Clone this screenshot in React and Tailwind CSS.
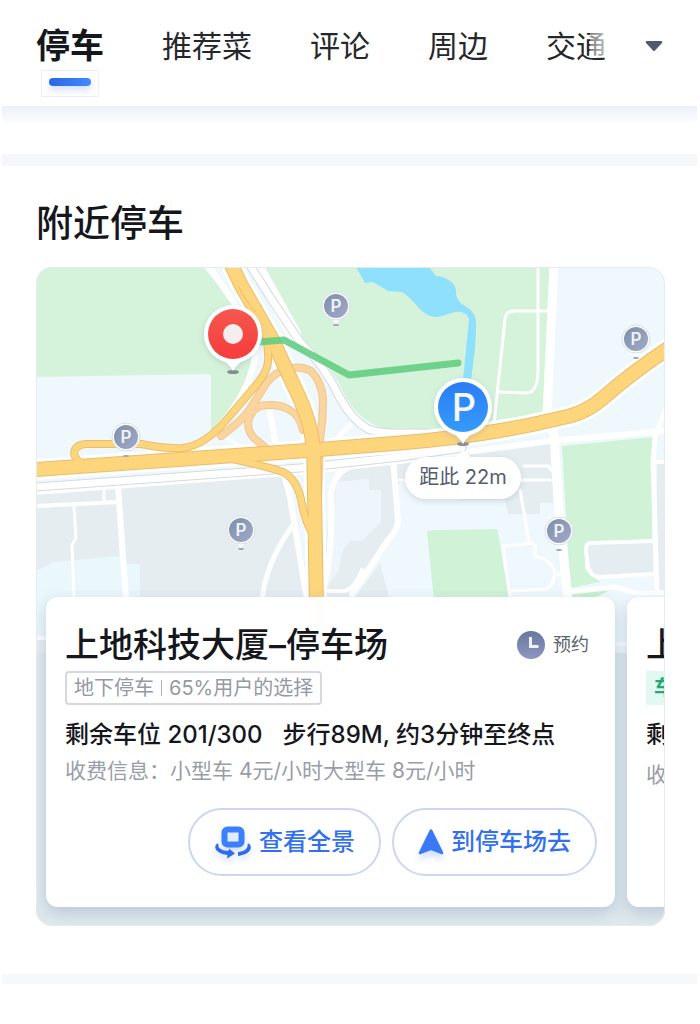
import React, { useState } from "react";

const tabs = ["停车", "推荐菜", "评论", "周边", "交通"];

const grayPins = [
  { x: 336, y: 306 },
  { x: 636, y: 339 },
  { x: 126, y: 437 },
  { x: 241, y: 530 },
  { x: 559, y: 531 },
];

// Yellow roads: every path is stroked twice, first the casing, then the fill
const ramps = [
  "M266 338 Q269 352 268 362 Q267 372 257 384 L228 418 Q205 446 182 448 Q165 449 141 444 L86 444 Q75 445 74 453 Q75 460 83 464",
  "M232 459 Q262 465 283 472 Q298 480 302 504 Q305 522 313 534",
];
const lightRamps = [
  "M221 436 Q238 424 248 412 L267 382 Q276 372 286 369 Q300 365 311 371 Q322 382 323 400 Q323 420 320 440 L318 497",
  "M303 430 Q300 415 288 409 Q277 403 260 406 Q250 411 248 422 Q248 432 254 438 L266 448",
];
const mainRoads = [
  "M230 262 L241 285 L256 311 L273 341 L293 384 Q305 408 310 428 Q314 445 314 465 L317 640",
  "M30 470 L300 451 L400 443 Q470 437 530 425 L570 416 Q588 411 603 398 Q635 370 672 346",
];
const frontage = [
  "M248 262 L270 297 L300 342 Q325 366 340 398 Q352 420 368 429 Q380 434 410 433 L462 434",
  "M36 487 L300 468 L400 457 L462 448",
];

function GrayPin({ x, y }) {
  return (
    <g>
      <ellipse cx={x} cy={y + 19} rx="3" ry="1" fill="#9aa5b0" />
      <path d={`M${x - 5} ${y + 12} L${x} ${y + 18} L${x + 5} ${y + 12}Z`} fill="#fff" />
      <circle cx={x} cy={y} r="14" fill="#fff" stroke="#d5dfe8" strokeWidth="1" />
      <circle cx={x} cy={y} r="12" fill="url(#grayPin)" />
      <text x={x} y={y + 6} textAnchor="middle" fontSize="17" fontWeight="600" fill="#f1f4fa">
        P
      </text>
    </g>
  );
}

function MapView() {
  return (
    <svg
      viewBox="36 267 629 659"
      preserveAspectRatio="xMidYMin slice"
      className="absolute inset-0 h-full w-full"
      aria-label="附近停车地图"
    >
      <defs>
        <linearGradient id="grayPin" x1="0" y1="0" x2="1" y2="1">
          <stop offset="0" stopColor="#7e8fa8" />
          <stop offset="1" stopColor="#a2a9cb" />
        </linearGradient>
        <linearGradient id="redPin" x1="0" y1="0" x2="0" y2="1">
          <stop offset="0" stopColor="#f5574f" />
          <stop offset="1" stopColor="#f63c3c" />
        </linearGradient>
        <linearGradient id="bluePin" x1="0" y1="0" x2="0" y2="1">
          <stop offset="0" stopColor="#2b7df5" />
          <stop offset="1" stopColor="#359bfb" />
        </linearGradient>
        <filter id="soft" x="-30%" y="-30%" width="160%" height="180%">
          <feDropShadow dx="0" dy="2" stdDeviation="3" floodColor="#7d90a8" floodOpacity="0.3" />
        </filter>
      </defs>

      {/* land */}
      <rect x="36" y="267" width="629" height="659" fill="#eff8fc" />
      <path d="M36 267 H203 L232 302 L252 350 Q250 385 238 398 L211 432 V377 Q211 374 207 374 L36 377Z" fill="#d5f3da" />
      <path d="M262 267 H553 L546 416 Q490 428 458 430 L385 428 Q362 424 345 396 Q335 370 302 340Z" fill="#d5f3da" />
      <path d="M356 267 L365 283 L373 282 L388 291 L402 292 Q410 297 418 307 Q428 318 438 317 L452 313 Q465 309 469 319 L463 380 L471 380 Q476 345 476 328 Q477 313 468 308 Q457 302 456 294 Q457 285 450 281 Q443 276 436 276 L429 267Z" fill="#8fe0fd" />
      <path d="M36 490 L285 474 L312 597 V926 H36Z" fill="#e5edf1" />
      <path d="M36 570 Q45 568 52 562 L120 556 L125 564 H140 V640 H36Z" fill="#eaf7fb" />
      <path d="M331 480 L345 466 L393 460 L395 525 L350 600 H322Z" fill="#e5edf1" />
      <path d="M336 482 L369 479 V490 H381 V522 L362 541 H350 L342 552 L339 570 L328 586Z" fill="#edf7fb" />
      <path d="M395 459 L550 442 L554 503 H540 V514 H508 L505 500 H460 L404 480 L397 485Z" fill="#e5edf1" />
      <path d="M355 597 L380 563 L389 597Z" fill="#e5edf1" />
      <path d="M427 532 Q428 530 436 530 L496 529 Q498 529 498 532 L509 600 H434Z" fill="#d0f2d6" />
      <path d="M562 446 L653 437 L652 542 L585 543 V570 L600 582 L570 588Z" fill="#d0f2d6" />
      <path d="M587 544 L653 542 V574 L596 577 Q588 575 587 560Z" fill="#e5edf1" />
      <path d="M570 594 L610 590 L590 600 H570Z" fill="#c9f0cf" />
      <path d="M657 464 H666 V590 H657Z" fill="#e5edf1" />
      <rect x="36" y="653" width="629" height="273" fill="#dfe9ed" />

      {/* side streets */}
      <g fill="none" stroke="#fff" strokeLinecap="round" strokeLinejoin="round">
        <path d="M206 262 L236 306 L256 350 Q252 385 226 418 L208 440" strokeWidth="6" />
        <path d="M254 262 L294 334" strokeWidth="14" />
        <path d="M270 412 L275 440 L290 497 L307 600" strokeWidth="6" />
        <path d="M293 525 Q266 562 262 600" strokeWidth="5" />
        <path d="M36 492 L300 472 L400 461 L550 441 L666 431" strokeWidth="6" />
        <path d="M36 506 L119 502" strokeWidth="4" />
        <path d="M104 485 V502" strokeWidth="3" />
        <path d="M74 506 L76 538 L72 545 L74 600" strokeWidth="3" />
        <path d="M118 486 L126 600" strokeWidth="6" />
        <path d="M333 443 L350 425" strokeWidth="5" />
        <path d="M224 436 L240 446" strokeWidth="3" />
        <path d="M393 458 L398 520 Q398 530 388 540 L352 594" strokeWidth="6" />
        <path d="M360 464 Q334 468 331 494 Q333 550 324 588" strokeWidth="6" />
        <path d="M328 591 H345 Q355 588 362 570" strokeWidth="4" />
        <path d="M554 262 L547 416 L554 435 L558 500 L568 600" strokeWidth="9" />
        <path d="M538 267 V370 Q538 393 526 393 L500 392 M494 424 L505 319 Q506 311 514 311 H548" strokeWidth="3" />
        <path d="M400 480 H550 M524 466 H548 L553 472 M520 490 L529 541 L535 546 V556 Q550 559 555 572 Q553 588 545 589 L512 591 M503 546 L532 543 M554 574 H565 M503 546 L510 597" strokeWidth="3" />
        <path d="M666 408 L655 436 L653 462 L657 592" strokeWidth="5" />
        <path d="M655 462 H666 M653 541 L590 543 Q585 544 586 552 L588 566 Q590 577 600 577 L653 574" strokeWidth="4" />
        <path d="M570 592 L615 587 L635 593 H666" strokeWidth="5" />
        <path d="M36 638 H46 M612 644 H630" strokeWidth="4" />
      </g>
      <g fill="none" strokeLinecap="round" strokeLinejoin="round">
        {frontage.map((d) => (
          <path key={d} d={d} stroke="#d3dbe1" strokeWidth="9" />
        ))}
        {frontage.map((d) => (
          <path key={d} d={d} stroke="#fff" strokeWidth="7" />
        ))}
      </g>

      {/* main roads */}
      <g fill="none" strokeLinecap="round" strokeLinejoin="round">
        {mainRoads.map((d) => (
          <path key={d} d={d} stroke="#fff" strokeWidth="21" />
        ))}
        {lightRamps.map((d) => (
          <path key={d} d={d} stroke="#f3c48b" strokeWidth="8" />
        ))}
        {lightRamps.map((d) => (
          <path key={d} d={d} stroke="#fad5a0" strokeWidth="6" />
        ))}
        {ramps.map((d) => (
          <path key={d} d={d} stroke="#e9bd6a" strokeWidth="8" />
        ))}
        {mainRoads.map((d) => (
          <path key={d} d={d} stroke="#e9bd6a" strokeWidth="15" />
        ))}
        {ramps.map((d) => (
          <path key={d} d={d} stroke="#fdd57c" strokeWidth="6" />
        ))}
        {mainRoads.map((d) => (
          <path key={d} d={d} stroke="#fdd57c" strokeWidth="13" />
        ))}
        <path d="M239 287 Q243 298 256 312" stroke="#e9bd6a" strokeWidth="1" />
        <path d="M258 342 L284 340 L349 375 L458 363" stroke="#5ccb7c" strokeOpacity="0.85" strokeWidth="7" />
      </g>

      {grayPins.map((pin) => (
        <GrayPin key={`${pin.x}-${pin.y}`} x={pin.x} y={pin.y} />
      ))}

      {/* destination */}
      <ellipse cx="233" cy="372" rx="6" ry="2" fill="#7f8f88" />
      <g filter="url(#soft)">
        <path d="M219 358 Q228 362 233 371 Q238 362 247 358Z" fill="#fff" />
        <circle cx="233" cy="334" r="29" fill="#fff" />
      </g>
      <circle cx="233" cy="334" r="25" fill="url(#redPin)" />
      <circle cx="233" cy="334" r="10" fill="#f6eeee" />

      {/* selected parking lot */}
      <ellipse cx="463" cy="444" rx="6" ry="2" fill="#8b8f8c" />
      <g filter="url(#soft)">
        <path d="M449 431 Q458 435 463 444 Q468 435 477 431Z" fill="#fff" />
        <circle cx="463" cy="407" r="29" fill="#fff" />
      </g>
      <circle cx="463" cy="407" r="25" fill="url(#bluePin)" />
      <text x="464" y="421" textAnchor="middle" fontSize="38" fontWeight="500" fill="#f3f9ff">
        P
      </text>
      <g filter="url(#soft)">
        <path d="M453 459 L463 450 L473 459Z" fill="#fff" />
        <rect x="405" y="457" width="116" height="42" rx="21" fill="#fff" />
      </g>
      <text x="463" y="484" textAnchor="middle" fontSize="20" fill="#555d6e">
        距此 22m
      </text>
    </svg>
  );
}

function ClockIcon() {
  return (
    <svg viewBox="0 0 28 28" className="h-7 w-7" aria-hidden="true">
      <defs>
        <linearGradient id="clock" x1="0" y1="0" x2="0" y2="1">
          <stop offset="0" stopColor="#67789c" />
          <stop offset="1" stopColor="#8e97c3" />
        </linearGradient>
      </defs>
      <circle cx="14" cy="14" r="14" fill="url(#clock)" />
      <path d="M13.5 6V15.5H21.5" fill="none" stroke="#eef1f8" strokeWidth="3" />
    </svg>
  );
}

function PanoramaIcon() {
  return (
    <svg viewBox="0 0 38 34" className="h-[34px] w-[38px] drop-shadow-[0_4px_3px_rgba(80,120,250,0.25)]" aria-hidden="true">
      <rect x="10.5" y="4.5" width="17" height="15" rx="3" fill="#e3ecff" stroke="#3b7ffb" strokeWidth="6" />
      <path d="M3 18.5C-1.5 23 3 28.500 13.500 30L13 33.500L21 28.500L15 23.500L14.500 26C8 25.500 3.500 23.500 4.500 19Z" fill="#2f6bee" />
      <path d="M35 18.5C40 24 34 30 24 31L24 27C30 26.500 34.500 23.500 33.500 19Z" fill="#2f6bee" />
    </svg>
  );
}

function NavigateIcon() {
  return (
    <svg viewBox="0 0 26 26" className="h-[26px] w-[26px] drop-shadow-[0_5px_3px_rgba(80,120,250,0.25)]" aria-hidden="true">
      <path d="M11.500 1.500Q13 -1 14.500 1.500L25 23Q26 26 23 25L14 21.500Q13 21 12 21.500L3 25Q0 26 1 23Z" fill="#3a79f5" />
    </svg>
  );
}

const cardClass =
  "w-[569px] shrink-0 rounded-xl bg-white/98 pt-7 pb-[31px] pl-[19px] pr-[18px] shadow-[0_6px_16px_rgba(130,150,185,0.4)] whitespace-nowrap";
const actionClass =
  "flex h-[68px] items-center gap-[7px] rounded-full border-2 border-[#cbd6f3] bg-white px-6 text-2xl font-medium text-[#3270ee]";

const App = () => {
  const [active, setActive] = useState("停车");

  return (
    <div className="min-h-screen bg-white font-['Inter','Noto_Sans_CJK_SC',sans-serif] text-[#15171c]">
      <header>
        <nav className="flex items-start justify-between pt-[26px] pr-[37px] pb-[9px] pl-9">
          <div className="flex items-start gap-[58px] whitespace-nowrap">
            {tabs.map((tab) => (
              <button
                key={tab}
                type="button"
                onClick={() => setActive(tab)}
                className={`relative flex flex-col items-center leading-10 ${
                  active === tab ? "text-[34px] font-bold" : "text-[30px] text-[#25272b]"
                }`}
              >
                {tab}
                {active === tab && (
                  <span className="mt-1 flex h-[27px] w-[58px] justify-center border border-[#eceefa] pt-[7px]">
                    <span className="h-2 w-[42px] rounded-full bg-linear-to-r from-[#2b66e6] to-[#4389fb] shadow-[0_4px_6px_rgba(90,130,250,0.25)]" />
                  </span>
                )}
                {tab === "交通" && (
                  <span className="absolute top-0 right-0 h-8 w-4 bg-linear-to-r from-white/40 to-white/70" />
                )}
              </button>
            ))}
          </div>
          <button type="button" aria-label="更多" className="flex h-10 items-center">
            <svg viewBox="0 0 18 12" className="h-3 w-[18px]" aria-hidden="true">
              <path d="M2 1H16Q18 1 17 3L10 10.500Q9 11.500 8 10.500L1 3Q0 1 2 1Z" fill="#505971" />
            </svg>
          </button>
        </nav>
        <div className="mr-[3px] ml-[2px] h-12 bg-linear-to-b from-[#edf0f8] to-white to-40%" />
        <div className="mr-[3px] ml-[2px] h-3 bg-[#f5f7fa]" />
      </header>

      <main>
        <h2 className="pt-[30px] pl-9 text-[37px] leading-[56px] font-medium">附近停车</h2>

        <section className="relative mt-[15px] mr-[35px] ml-9 overflow-hidden rounded-2xl">
          <MapView />
          <div className="relative flex gap-3 overflow-hidden pt-[330px] pb-[19px] pl-[10px]">
            <article className={cardClass}>
              <div className="flex items-center justify-between">
                <h3 className="text-[34px] leading-10 font-medium">上地科技大厦–停车场</h3>
                <p className="flex items-center gap-2 pr-2 text-lg text-[#5d6470]">
                  <ClockIcon />
                  预约
                </p>
              </div>
              <p className="mt-[6px] flex h-[34px] w-fit items-center rounded border-2 border-[#d5d8de] px-[7px] text-xl text-[#9599a4]">
                地下停车
                <span className="mx-[7px] h-4 w-px bg-[#a9adb6]" />
                65%用户的选择
              </p>
              <p className="mt-[14px] flex gap-5 text-2xl leading-8 font-medium">
                <span>剩余车位 201/300</span>
                <span>步行89M, 约3分钟至终点</span>
              </p>
              <p className="mt-[6px] text-[21px] leading-7 text-[#999da7]">
                收费信息：小型车 4元/小时大型车 8元/小时
              </p>
              <div className="mt-[23px] flex justify-end gap-[11px]">
                <button type="button" className={actionClass}>
                  <PanoramaIcon />
                  查看全景
                </button>
                <button type="button" className={actionClass}>
                  <NavigateIcon />
                  到停车场去
                </button>
              </div>
            </article>

            <article className={cardClass}>
              <h3 className="text-[34px] leading-10 font-medium">上地</h3>
              <p className="mt-[6px] flex h-[34px] w-fit items-center bg-[#e3f8f2] px-2 text-xl font-bold text-[#21a97b]">
                车位
              </p>
              <p className="mt-[14px] text-2xl leading-8 font-medium">剩余</p>
              <p className="mt-[10px] text-[21px] leading-7 text-[#999da7]">收费</p>
            </article>
          </div>
          <div className="pointer-events-none absolute inset-0 rounded-2xl border border-[#e4ecef]" />
        </section>

        <div className="mt-12 mr-[3px] ml-[2px] h-[10px] bg-[#f6f8fa]" />
      </main>
    </div>
  );
};

export default App;
